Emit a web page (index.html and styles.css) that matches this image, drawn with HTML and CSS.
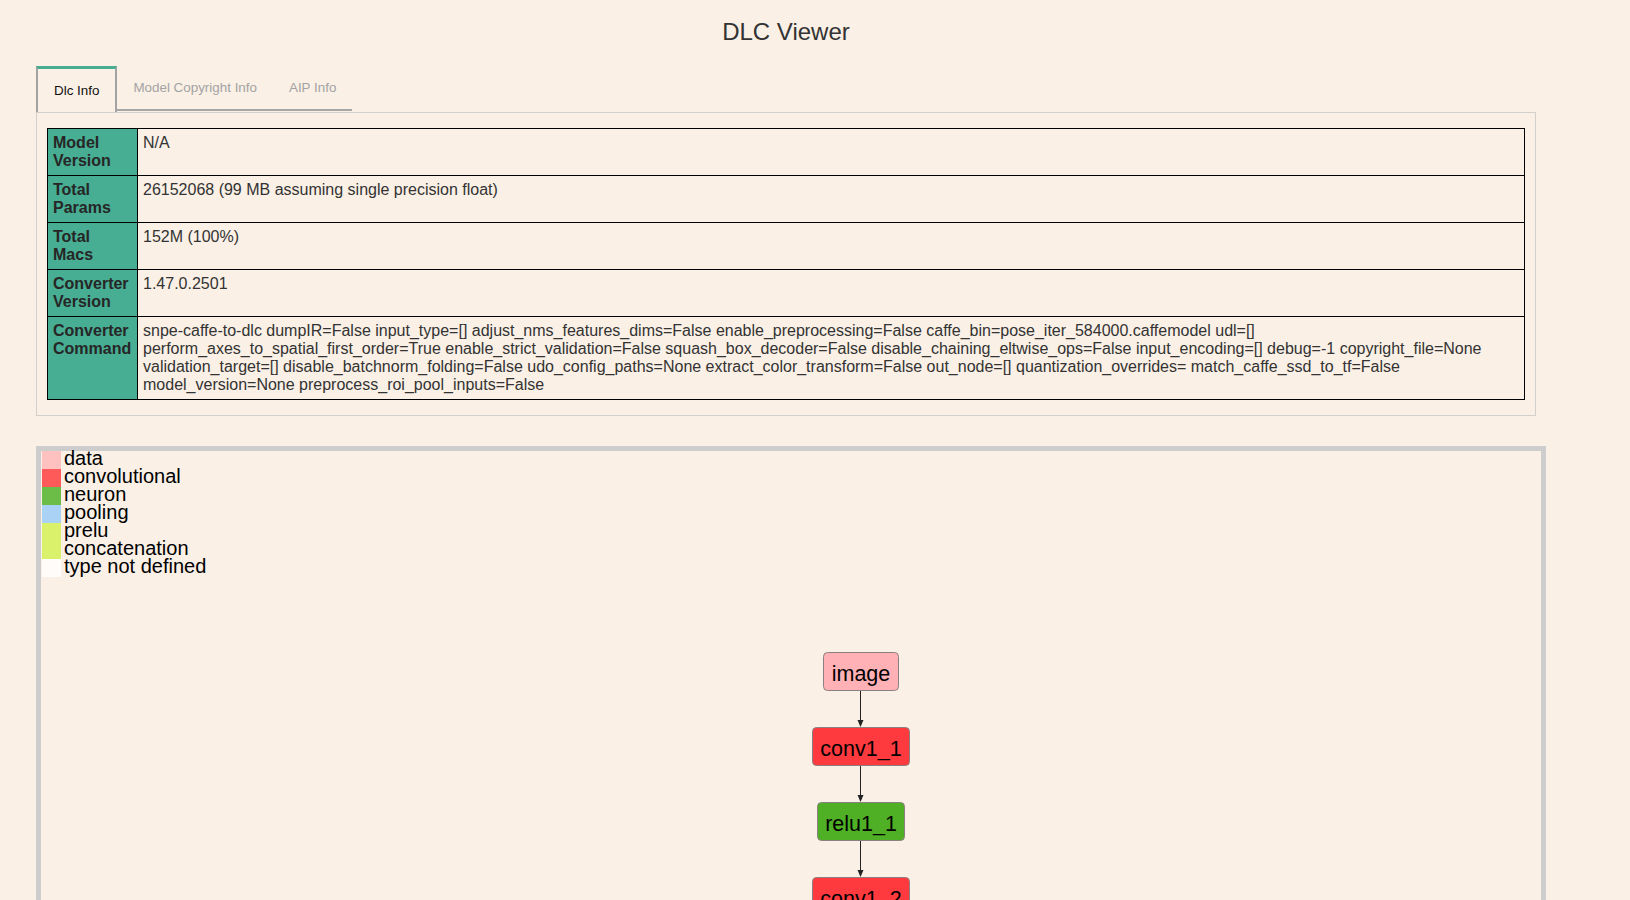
FILE: index.html
```
<!DOCTYPE html>
<html lang="en">
<head>
<meta charset="utf-8">
<title>DLC Viewer</title>
<link rel="stylesheet" href="styles.css">
</head>
<body>
<div class="page">
  <h1 class="title">DLC Viewer</h1>
  <div class="tabs">
    <div class="tab active">Dlc Info</div>
    <div class="tab">Model Copyright Info</div>
    <div class="tab">AIP Info</div>
  </div>
  <div class="panel">
    <table class="info">
      <tr><th>Model Version</th><td>N/A</td></tr>
      <tr><th>Total Params</th><td>26152068 (99 MB assuming single precision float)</td></tr>
      <tr><th>Total Macs</th><td>152M (100%)</td></tr>
      <tr><th>Converter Version</th><td>1.47.0.2501</td></tr>
      <tr><th>Converter Command</th><td>snpe-caffe-to-dlc dumpIR=False input_type=[] adjust_nms_features_dims=False enable_preprocessing=False caffe_bin=pose_iter_584000.caffemodel udl=[] perform_axes_to_spatial_first_order=True enable_strict_validation=False squash_box_decoder=False disable_chaining_eltwise_ops=False input_encoding=[] debug=-1 copyright_file=None validation_target=[] disable_batchnorm_folding=False udo_config_paths=None extract_color_transform=False out_node=[] quantization_overrides= match_caffe_ssd_to_tf=False model_version=None preprocess_roi_pool_inputs=False</td></tr>
    </table>
  </div>
  <div class="graph">
    <ul class="legend">
      <li class="legend-row"><span class="swatch sw-data"></span><span class="legend-label">data</span></li>
      <li class="legend-row"><span class="swatch sw-conv"></span><span class="legend-label">convolutional</span></li>
      <li class="legend-row"><span class="swatch sw-neuron"></span><span class="legend-label">neuron</span></li>
      <li class="legend-row"><span class="swatch sw-pool"></span><span class="legend-label">pooling</span></li>
      <li class="legend-row"><span class="swatch sw-prelu"></span><span class="legend-label">prelu</span></li>
      <li class="legend-row"><span class="swatch sw-concat"></span><span class="legend-label">concatenation</span></li>
      <li class="legend-row"><span class="swatch sw-none"></span><span class="legend-label">type not defined</span></li>
    </ul>
    <svg class="diagram" width="1500" height="800" viewBox="0 0 1500 800" xmlns="http://www.w3.org/2000/svg">
      <g class="edges">
        <line x1="819.5" y1="240" x2="819.5" y2="270"/>
        <polygon points="816.5,269 822.5,269 819.5,276"/>
        <line x1="819.5" y1="315" x2="819.5" y2="345"/>
        <polygon points="816.5,344 822.5,344 819.5,351"/>
        <line x1="819.5" y1="390" x2="819.5" y2="420"/>
        <polygon points="816.5,419 822.5,419 819.5,426"/>
        <line x1="819.5" y1="465" x2="819.5" y2="495"/>
        <polygon points="816.5,494 822.5,494 819.5,501"/>
      </g>
      <g class="node">
        <rect x="782.5" y="201.5" width="75" height="38" rx="4" fill="#ffb1b6"/>
        <text x="820" y="229.5">image</text>
      </g>
      <g class="node">
        <rect x="771.5" y="276.5" width="97" height="38" rx="4" fill="#ff3a3f"/>
        <text x="820" y="304.5">conv1_1</text>
      </g>
      <g class="node">
        <rect x="776.5" y="351.5" width="87" height="38" rx="4" fill="#4fb026"/>
        <text x="820" y="379.5">relu1_1</text>
      </g>
      <g class="node">
        <rect x="771.5" y="426.5" width="97" height="38" rx="4" fill="#ff3a3f"/>
        <text x="820" y="454.5">conv1_2</text>
      </g>
      <g class="node">
        <rect x="776.5" y="501.5" width="87" height="38" rx="4" fill="#4fb026"/>
        <text x="820" y="529.5">relu1_2</text>
      </g>
    </svg>
  </div>
</div>
</body>
</html>
```
FILE: styles.css
```
html, body {
  margin: 0;
  padding: 0;
  background: #faf0e6;
}

body {
  font-family: "Liberation Sans", Arial, sans-serif;
  color: #333;
}

.page {
  width: 1500px;
  margin-left: 36px;
}

.title {
  margin: 18px 0 0;
  font-size: 24px;
  line-height: 28px;
  font-weight: normal;
  text-align: center;
  color: #333;
}

.tabs {
  display: flex;
  align-items: flex-end;
  margin-top: 20px;
  height: 46px;
}

.tab {
  font-size: 13.4px;
  line-height: 15px;
  padding: 14px 16px;
  color: #a3a3a3;
  border-bottom: 2px solid #a6a6a6;
  margin-bottom: 1px;
}

.tab.active {
  color: #111;
  border-top: 3px solid #47ae94;
  border-left: 2px solid #a3a3a3;
  border-right: 2px solid #a3a3a3;
  border-bottom: none;
  margin-bottom: 0;
  padding: 14px 16px 14px 16px;
}

.panel {
  box-sizing: border-box;
  width: 1500px;
  border: 1px solid #d3d0cc;
  padding: 15px 10px;
}

.info {
  width: 100%;
  border-collapse: collapse;
  font-size: 16px;
  line-height: 18px;
}

.info th,
.info td {
  border: 1px solid #000;
  padding: 5px 5px 5px;
  vertical-align: top;
  text-align: left;
}

.info th {
  width: 79px;
  background: #47ad93;
  color: #262626;
  font-weight: bold;
}

.info td {
  color: #333;
}

.graph {
  position: relative;
  box-sizing: border-box;
  width: 1510px;
  height: 800px;
  margin-top: 30px;
  border: 5px solid #cdcdcd;
}

.legend {
  list-style: none;
  margin: 0;
  padding: 0 0 0 1px;
  position: relative;
  z-index: 1;
}

.legend-row {
  display: flex;
  align-items: flex-start;
  height: 18px;
}

.swatch {
  width: 19px;
  height: 18px;
  margin-right: 3px;
}

.legend-label {
  font-size: 20px;
  line-height: 15px;
  color: #000;
}

.sw-data { background: #ffc0c0; }
.sw-conv { background: #ff5a5a; }
.sw-neuron { background: #6cbd48; }
.sw-pool { background: #aad2f5; }
.sw-prelu { background: #daf26b; }
.sw-concat { background: #daf26b; }
.sw-none { background: #fffcfa; }

.diagram {
  position: absolute;
  left: 0;
  top: 0;
}

.edges line {
  stroke: #222;
  stroke-width: 1;
}

.edges polygon {
  fill: #222;
}

.node rect {
  stroke: #8a8080;
  stroke-width: 1;
}

.node text {
  font-family: "Liberation Sans", Arial, sans-serif;
  font-size: 21.5px;
  fill: #000;
  text-anchor: middle;
}
```
